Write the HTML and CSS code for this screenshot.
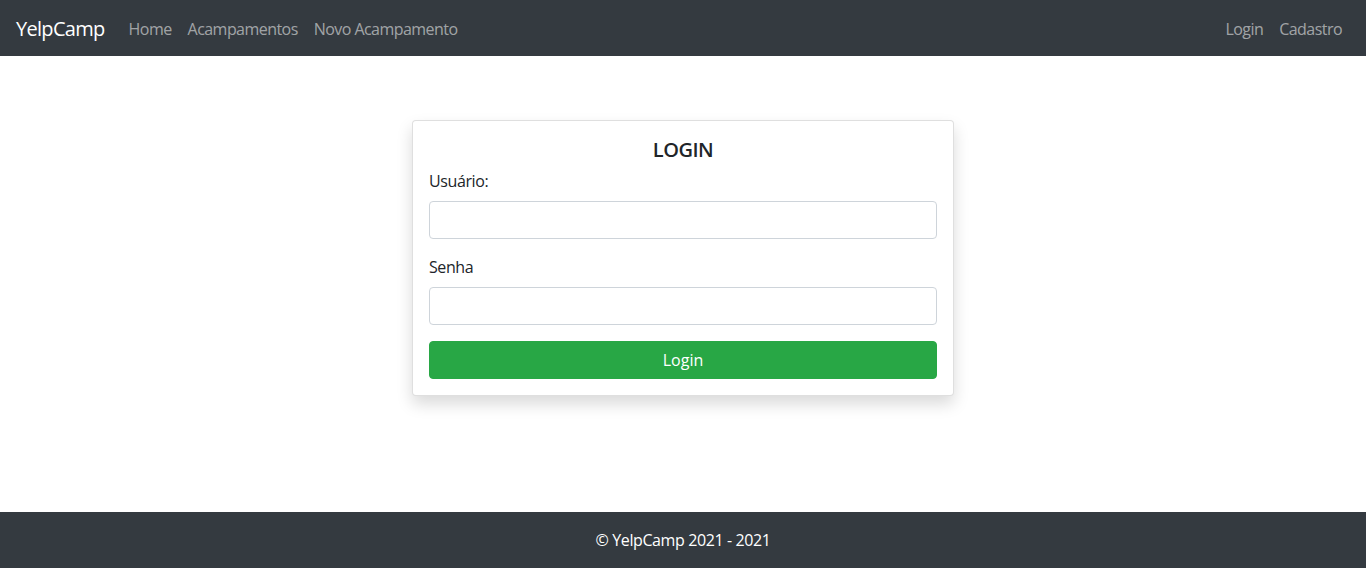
FILE: index.html
```html
<!DOCTYPE html>
<html lang="pt">
<head>
<meta charset="utf-8">
<title>YelpCamp</title>
<link rel="stylesheet" href="styles.css">
</head>
<body>
<nav class="navbar">
  <a class="brand" href="#">YelpCamp</a>
  <div class="nav-main">
    <a class="nav-link" href="#">Home</a>
    <a class="nav-link" href="#">Acampamentos</a>
    <a class="nav-link" href="#">Novo Acampamento</a>
  </div>
  <div class="nav-right">
    <a class="nav-link" href="#">Login</a>
    <a class="nav-link" href="#">Cadastro</a>
  </div>
</nav>
<main class="main">
  <div class="card">
    <form class="card-body">
      <h5 class="card-title">LOGIN</h5>
      <div class="field">
        <label class="form-label" for="username">Usuário:</label>
        <input class="form-control" type="text" id="username">
      </div>
      <div class="field">
        <label class="form-label" for="password">Senha</label>
        <input class="form-control" type="password" id="password">
      </div>
      <button class="btn" type="button">Login</button>
    </form>
  </div>
</main>
<footer class="footer">
  <span>© YelpCamp 2021 - 2021</span>
</footer>
</body>
</html>
```

FILE: styles.css
```css
* { box-sizing: border-box; }
html, body { margin: 0; padding: 0; }
body {
  font-family: "Open Sans", "Noto Sans", "Liberation Sans", sans-serif;
  font-size: 16px;
  line-height: 1.5;
  letter-spacing: -0.4px;
  color: #212529;
  background: #fff;
  min-height: 100vh;
  display: flex;
  flex-direction: column;
}
a { text-decoration: none; }

.navbar {
  height: 56px;
  background: #343a40;
  display: flex;
  align-items: center;
  padding: 2px 16px 0;
}
.brand {
  color: #fff;
  font-size: 20px;
  line-height: 30px;
  letter-spacing: -0.7px;
  margin-right: 16px;
}
.nav-main, .nav-right { display: flex; }
.nav-right { margin-left: auto; }
.nav-link {
  color: rgba(255,255,255,.55);
  padding: 8px;
  line-height: 24px;
  letter-spacing: -0.55px;
}

.main {
  display: flex;
  justify-content: center;
  padding-top: 64px;
}
.card {
  width: 542px;
  background: #fff;
  border: 1px solid rgba(0,0,0,.125);
  border-radius: 4px;
  box-shadow: 0 8px 16px rgba(0,0,0,.15);
}
.card-body {
  padding: 16px;
  margin: 0;
}
.card-title {
  margin: 0 0 7px;
  padding-top: 1px;
  font-size: 20px;
  line-height: 24px;
  font-weight: 600;
  letter-spacing: -0.5px;
  text-align: center;
}
.field { margin-bottom: 16px; }
.form-label {
  display: block;
  margin-bottom: 8px;
  line-height: 24px;
  padding-top: 1px;
  margin-top: -1px;
}
.form-control {
  display: block;
  width: 100%;
  height: 38px;
  border: 1px solid #ced4da;
  border-radius: 4px;
  padding: 6px 12px;
  font: inherit;
}
.btn {
  display: block;
  width: 100%;
  height: 38px;
  background: #28a745;
  border: 1px solid #28a745;
  border-radius: 4px;
  color: #fff;
  font: inherit;
  padding: 6px 12px;
}

.footer {
  margin-top: auto;
  height: 56px;
  background: #343a40;
  color: #fff;
  display: flex;
  align-items: center;
  justify-content: center;
}
```
